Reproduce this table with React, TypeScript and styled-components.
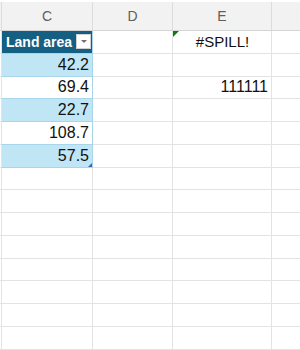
import React from "react";
import styled, { createGlobalStyle } from "styled-components";

const GlobalStyle = createGlobalStyle`
  html, body {
    margin: 0;
    padding: 0;
    background: #ffffff;
    overflow: hidden;
  }
  body {
    font-family: "Liberation Sans", Arial, sans-serif;
  }
`;

const ROW_H = 22.77;
const COLS = [2, 91, 80, 99, 60];

const Sheet = styled.div`
  width: 300px;
  height: 350px;
  overflow: hidden;
  display: flex;
  flex-direction: column;
`;

const HeaderRow = styled.div`
  display: flex;
  height: 31px;
  flex-shrink: 0;
  box-sizing: border-box;
  padding-top: 2px;
  background: #ffffff;
`;

const HeaderCell = styled.div<{ $w: number }>`
  width: ${(p) => p.$w}px;
  flex-shrink: 0;
  box-sizing: border-box;
  background: #f2f2f2;
  border-right: 1px solid #dcdcdc;
  border-bottom: 1px solid #d4d4d4;
  display: flex;
  align-items: center;
  justify-content: center;
  font-size: 14px;
  color: #5e5e5e;
`;

const Row = styled.div`
  display: flex;
  height: ${ROW_H}px;
  flex-shrink: 0;
`;

type Tone = "plain" | "head" | "band" | "white";

const bg: Record<Tone, string> = {
  plain: "#ffffff",
  head: "#156082",
  band: "#c0e6f5",
  white: "#ffffff",
};

const Spacer = styled.div`
  width: 2px;
  flex-shrink: 0;
  box-sizing: border-box;
  border-right: 1px solid #e3e3e3;
  border-bottom: 1px solid #e3e3e3;
`;

const Cell = styled.div<{ $w: number; $tone?: Tone; $align?: string }>`
  position: relative;
  width: ${(p) => p.$w}px;
  flex-shrink: 0;
  box-sizing: border-box;
  background: ${(p) => bg[p.$tone || "plain"]};
  border-right: 1px solid
    ${(p) => (p.$tone && p.$tone !== "plain" ? "#a9d5ea" : "#e3e3e3")};
  border-bottom: 1px solid
    ${(p) => (p.$tone && p.$tone !== "plain" ? "#a9d5ea" : "#e3e3e3")};
  display: flex;
  align-items: center;
  justify-content: ${(p) => p.$align || "flex-end"};
  padding: 0 3px 0 4px;
  font-size: 16px;
  color: #111111;
  white-space: nowrap;
`;

const HeadLabel = styled.span`
  flex: 1;
  font-size: 14px;
  font-weight: bold;
  color: #ffffff;
`;

const FilterButton = styled.div`
  width: 15px;
  height: 15px;
  margin-right: -2px;
  box-sizing: border-box;
  background: #ffffff;
  border: 1px solid #d0d0d0;
  display: flex;
  align-items: center;
  justify-content: center;
`;

const Arrow = styled.div`
  width: 0;
  height: 0;
  border-left: 3px solid transparent;
  border-right: 3px solid transparent;
  border-top: 3px solid #707070;
`;

const ErrorText = styled.span`
  font-size: 15px;
`;

const ErrorFlag = styled.div`
  position: absolute;
  left: 0;
  top: 0;
  width: 0;
  height: 0;
  border-top: 6px solid #107c10;
  border-right: 6px solid transparent;
`;

const ResizeHandle = styled.div`
  position: absolute;
  right: 0;
  bottom: 0;
  width: 0;
  height: 0;
  border-bottom: 4px solid #3c64b4;
  border-left: 4px solid transparent;
`;

type RowData = { c?: string; tone?: Tone; e?: React.ReactNode; last?: boolean };

const rows: RowData[] = [
  { tone: "head" },
  { c: "42.2", tone: "band" },
  { c: "69.4", tone: "white", e: "111111" },
  { c: "22.7", tone: "band" },
  { c: "108.7", tone: "white" },
  { c: "57.5", tone: "band", last: true },
];

export default function App() {
  const blank = Array.from({ length: 9 });
  return (
    <Sheet>
      <GlobalStyle />
      <HeaderRow>
        <HeaderCell $w={COLS[0]} />
        <HeaderCell $w={COLS[1]}>C</HeaderCell>
        <HeaderCell $w={COLS[2]}>D</HeaderCell>
        <HeaderCell $w={COLS[3]}>E</HeaderCell>
        <HeaderCell $w={COLS[4]} />
      </HeaderRow>

      {rows.map((r, i) => (
        <Row key={i}>
          <Spacer />
          {r.tone === "head" ? (
            <Cell $w={COLS[1]} $tone="head" $align="space-between">
              <HeadLabel>Land area</HeadLabel>
              <FilterButton>
                <Arrow />
              </FilterButton>
            </Cell>
          ) : (
            <Cell $w={COLS[1]} $tone={r.tone}>
              {r.c}
              {r.last && <ResizeHandle />}
            </Cell>
          )}
          <Cell $w={COLS[2]} />
          {i === 0 ? (
            <Cell $w={COLS[3]} $align="center">
              <ErrorFlag />
              <ErrorText>#SPILL!</ErrorText>
            </Cell>
          ) : (
            <Cell $w={COLS[3]}>{r.e}</Cell>
          )}
          <Cell $w={COLS[4]} />
        </Row>
      ))}

      {blank.map((_, i) => (
        <Row key={`b${i}`}>
          <Spacer />
          {COLS.slice(1).map((w, j) => (
            <Cell key={j} $w={w} />
          ))}
        </Row>
      ))}
    </Sheet>
  );
}
